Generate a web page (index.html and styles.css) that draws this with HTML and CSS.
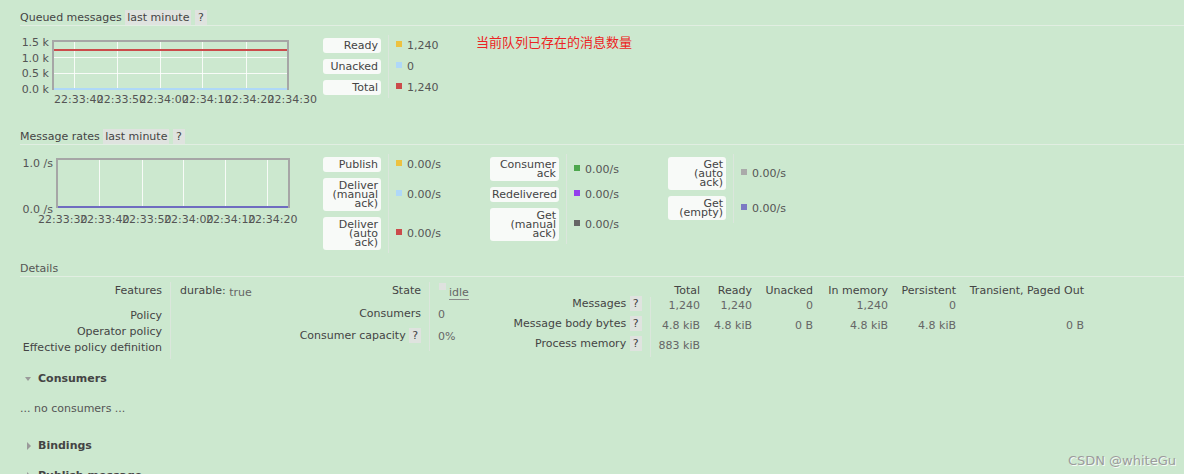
FILE: index.html
```html
<!DOCTYPE html>
<html lang="zh">
<head>
<meta charset="utf-8">
<title>Queue details</title>
<link rel="stylesheet" href="styles.css">
</head>
<body>
<main class="page">
  <h3 class="sec sec-queued">Queued messages <span class="pill">last minute</span> <span class="pill q">?</span></h3>
  <div class="chart-row">
    <svg class="chart" width="300" height="74" viewBox="0 0 300 74">
      <g class="grid">
        <line x1="54.5" y1="8" x2="54.5" y2="56"/>
        <line x1="97.5" y1="8" x2="97.5" y2="56"/>
        <line x1="140.5" y1="8" x2="140.5" y2="56"/>
        <line x1="182.5" y1="8" x2="182.5" y2="56"/>
        <line x1="226.5" y1="8" x2="226.5" y2="56"/>
        <line x1="33" y1="24.5" x2="268" y2="24.5"/>
        <line x1="33" y1="40.5" x2="268" y2="40.5"/>
      </g>
      <rect class="frame" x="33" y="8" width="235" height="48"/>
      <line class="s-ready" x1="34" y1="17" x2="267" y2="17"/>
      <line class="s-unacked" x1="34" y1="56" x2="267" y2="56"/>
      <line class="s-total" x1="34" y1="17" x2="267" y2="17"/>
      <text class="yl" x="29" y="13">1.5 k</text>
      <text class="yl" x="29" y="28.5">1.0 k</text>
      <text class="yl" x="29" y="44">0.5 k</text>
      <text class="yl" x="29" y="60">0.0 k</text>
      <text class="xl" x="34" y="70">22:33:40</text>
      <text class="xl" x="76.7" y="70">22:33:50</text>
      <text class="xl" x="119.4" y="70">22:34:00</text>
      <text class="xl" x="162" y="70">22:34:10</text>
      <text class="xl" x="204.8" y="70">22:34:20</text>
      <text class="xl" x="247.5" y="70">22:34:30</text>
    </svg>
    <table class="legend lg-q">
      <tr><th><span class="key">Ready</span></th><td><span class="sw c1"></span>1,240</td></tr>
      <tr><th><span class="key">Unacked</span></th><td><span class="sw c2"></span>0</td></tr>
      <tr class="last"><th><span class="key">Total</span></th><td><span class="sw c3"></span>1,240</td></tr>
    </table>
    <p class="note">当前队列已存在的消息数量</p>
  </div>

  <h3 class="sec sec-rates">Message rates <span class="pill">last minute</span> <span class="pill q">?</span></h3>
  <div class="chart-row">
    <svg class="chart" width="300" height="74" viewBox="0 0 300 74">
      <g class="grid">
        <line x1="79.5" y1="7" x2="79.5" y2="55"/>
        <line x1="122.5" y1="7" x2="122.5" y2="55"/>
        <line x1="163.5" y1="7" x2="163.5" y2="55"/>
        <line x1="205.5" y1="7" x2="205.5" y2="55"/>
        <line x1="247.5" y1="7" x2="247.5" y2="55"/>
      </g>
      <rect class="frame" x="37" y="7" width="232" height="48"/>
      <line class="s-empty" x1="38" y1="55" x2="268" y2="55"/>
      <text class="yl" x="33" y="14.5">1.0 /s</text>
      <text class="yl" x="33" y="60.5">0.0 /s</text>
      <text class="xl" x="18" y="71">22:33:30</text>
      <text class="xl" x="60" y="71">22:33:40</text>
      <text class="xl" x="102" y="71">22:33:50</text>
      <text class="xl" x="144" y="71">22:34:00</text>
      <text class="xl" x="186" y="71">22:34:10</text>
      <text class="xl" x="228" y="71">22:34:20</text>
    </svg>
    <div class="legends">
      <table class="legend lg-r">
        <tr><th><span class="key">Publish</span></th><td><span class="sw c1"></span>0.00/s</td></tr>
        <tr><th><span class="key">Deliver<br>(manual<br>ack)</span></th><td><span class="sw c2"></span>0.00/s</td></tr>
        <tr class="last"><th><span class="key">Deliver<br>(auto<br>ack)</span></th><td><span class="sw c3"></span>0.00/s</td></tr>
      </table>
      <table class="legend lg-r">
        <tr><th><span class="key wide">Consumer<br>ack</span></th><td><span class="sw c4"></span>0.00/s</td></tr>
        <tr><th><span class="key wide">Redelivered</span></th><td><span class="sw c5"></span>0.00/s</td></tr>
        <tr class="last"><th><span class="key wide">Get<br>(manual<br>ack)</span></th><td><span class="sw c6"></span>0.00/s</td></tr>
      </table>
      <table class="legend lg-r">
        <tr><th><span class="key">Get<br>(auto<br>ack)</span></th><td><span class="sw c7"></span>0.00/s</td></tr>
        <tr class="last"><th><span class="key">Get<br>(empty)</span></th><td><span class="sw c8"></span>0.00/s</td></tr>
      </table>
    </div>
  </div>

  <h3 class="sec sec-details">Details</h3>
  <div class="details">
    <table class="kv kv1">
      <tr class="r1"><th>Features</th><td><span class="feat">durable:</span> <span class="fv">true</span></td></tr>
      <tr><th>Policy</th><td></td></tr>
      <tr><th>Operator policy</th><td></td></tr>
      <tr class="rl"><th>Effective policy definition</th><td></td></tr>
    </table>
    <table class="kv kv2">
      <tr class="s1"><th>State</th><td><span class="st-box"></span><abbr class="idle">idle</abbr></td></tr>
      <tr class="s2"><th>Consumers</th><td class="val">0</td></tr>
      <tr class="s3"><th>Consumer capacity <span class="pill q">?</span></th><td class="val">0%</td></tr>
    </table>
    <table class="stats">
      <colgroup>
        <col class="w-lbl"><col class="w1"><col class="w2"><col class="w3"><col class="w4"><col class="w5"><col class="w6">
      </colgroup>
      <tr class="hd"><th></th><th>Total</th><th>Ready</th><th>Unacked</th><th>In memory</th><th>Persistent</th><th>Transient, Paged Out</th></tr>
      <tr><th>Messages <span class="pill q">?</span></th><td class="first">1,240</td><td>1,240</td><td>0</td><td>1,240</td><td>0</td><td></td></tr>
      <tr><th>Message body bytes <span class="pill q">?</span></th><td class="first">4.8 kiB</td><td>4.8 kiB</td><td>0 B</td><td>4.8 kiB</td><td>4.8 kiB</td><td>0 B</td></tr>
      <tr><th>Process memory <span class="pill q">?</span></th><td class="first">883 kiB</td><td></td><td></td><td></td><td></td><td></td></tr>
    </table>
  </div>

  <h2 class="toggle t-consumers"><span class="tri down"></span>Consumers</h2>
  <p class="empty">... no consumers ...</p>
  <h2 class="toggle t-bindings"><span class="tri right"></span>Bindings</h2>
  <h2 class="toggle t-publish"><span class="tri right"></span>Publish message</h2>
</main>
<div class="watermark">CSDN @whiteGu</div>
</body>
</html>
```

FILE: styles.css
```css
html, body {
  margin: 0;
  padding: 0;
  overflow: hidden;
  background: #cce8cf;
}
body {
  font-family: "DejaVu Sans", Verdana, sans-serif;
  font-size: 11px;
  color: #444;
  width: 1184px;
  height: 474px;
  position: relative;
}
.page {
  padding: 10px 0 0 20px;
}

/* section headings */
.sec {
  margin: 0;
  font-size: 11px;
  font-weight: normal;
  line-height: 15px;
  border-bottom: 1px solid #e1eee2;
  color: #444;
  white-space: nowrap;
}
.sec-rates { margin-top: 22px; }
.sec-details { margin-top: 8px; color: #555; }

.pill {
  background: #dfe3df;
  padding: 1px 2px;
  color: #444;
}
.pill.q { padding: 1px 3px; }

/* charts */
.chart-row {
  display: flex;
  align-items: flex-start;
  margin-top: 7px;
}
.chart {
  display: block;
  flex: none;
  overflow: visible;
}
.chart .grid line {
  stroke: #ffffff;
  stroke-width: 1;
  opacity: 0.85;
}
.chart .frame {
  fill: none;
  stroke: #a6a6a6;
  stroke-width: 2;
}
.chart text {
  font-family: "DejaVu Sans", Verdana, sans-serif;
  font-size: 11px;
  fill: #545454;
}
.chart .yl { text-anchor: end; }
.s-ready { stroke: #edc240; stroke-width: 2; }
.s-unacked { stroke: #afd8f8; stroke-width: 2; }
.s-total { stroke: #cb4b4b; stroke-width: 2; }
.s-empty { stroke: #6f6cc0; stroke-width: 2; }

/* legends */
.legends {
  display: flex;
  align-items: flex-start;
  margin-left: 3px;
}
.lg-q { margin-left: 3px; }
.legend {
  border-collapse: collapse;
  margin-top: 2px;
  flex: none;
}
.legend th {
  padding: 3px 7px 3px 0;
  font-weight: normal;
  vertical-align: top;
  text-align: right;
}
.legend tr.last th { padding-bottom: 3px; }
.legend td {
  border-left: 1px solid #dbe6dc;
  padding: 0 0 0 7px;
  vertical-align: middle;
  color: #555;
  white-space: nowrap;
  width: 94px;
}
.lg-q td { width: 70px; }
.key {
  display: block;
  box-sizing: border-box;
  width: 58px;
  padding: 3px 3px 3px 2px;
  background: #f8faf8;
  border-radius: 3px;
  line-height: 9px;
  text-align: right;
  white-space: nowrap;
  color: #444;
}
.key.wide { width: 69px; }
.sw {
  display: inline-block;
  width: 6px;
  height: 6px;
  margin-right: 5px;
  vertical-align: 2px;
}
.c1 { background: #edc240; }
.c2 { background: #afd8f8; }
.c3 { background: #cb4b4b; }
.c4 { background: #4da74d; }
.c5 { background: #9440ed; }
.c6 { background: #666666; }
.c7 { background: #aaaaaa; }
.c8 { background: #7c79c3; }

.note {
  margin: 0 0 0 10px;
  font-family: "Noto Sans CJK SC", "DejaVu Sans", sans-serif;
  font-size: 13px;
  line-height: 18px;
  color: #ec2424;
  white-space: nowrap;
}

/* details */
.details {
  display: flex;
  align-items: flex-start;
  margin-top: 5px;
}
.kv {
  border-collapse: collapse;
  flex: none;
}
.kv th {
  text-align: right;
  font-weight: normal;
  padding: 0 8px 0 0;
  line-height: 16px;
  vertical-align: top;
  white-space: nowrap;
}
.kv td {
  border-left: 1px solid #dbe6dc;
  padding: 0 0 0 8px;
  line-height: 16px;
  vertical-align: top;
  white-space: nowrap;
}
.kv1 th { width: 142px; }
.kv1 td { width: 81px; padding-left: 9px; }
.kv1 .r1 > * { padding-top: 1px; padding-bottom: 7px; }
.kv1 .rl > * { padding-bottom: 3px; }
.feat { color: #444; }
.fv { color: #666; vertical-align: -2px; }

.kv2 th { width: 160px; }
.kv2 td { width: 64px; color: #666; }
.kv2 .s1 > * { padding-top: 1px; padding-bottom: 6px; }
.kv2 .s2 > * { padding-bottom: 5px; }
.kv2 .s3 > * { padding-bottom: 6px; }
.kv2 .val { padding-top: 1px; }
.kv2 .s3 th { padding-top: 0; }
.st-box {
  display: inline-block;
  width: 7px;
  height: 7px;
  background: #dfe2df;
  margin: 0 3px 0 1px;
  vertical-align: 4px;
}
.idle {
  text-decoration: none;
  border-bottom: 1px solid #8a8a8a;
  color: #666;
  vertical-align: -2px;
  line-height: 13px;
  display: inline-block;
}

.stats {
  border-collapse: collapse;
  table-layout: fixed;
  width: 582px;
  margin-top: 4px;
  flex: none;
}
.w-lbl { width: 148px; }
.w1 { width: 50px; }
.w2 { width: 52px; }
.w3 { width: 61px; }
.w4 { width: 75px; }
.w5 { width: 68px; }
.w6 { width: 128px; }
.stats th, .stats td {
  padding: 0;
  text-align: right;
  white-space: nowrap;
  vertical-align: top;
  font-weight: normal;
}
.stats .hd th {
  line-height: 10px;
  height: 10px;
  padding-bottom: 1px;
  color: #444;
}
.stats tr th:first-child {
  padding-right: 8px;
  line-height: 14px;
  padding-bottom: 6px;
}
.stats .hd th:first-child { padding-bottom: 1px; line-height: 10px; }
.stats td {
  line-height: 14px;
  padding-top: 2px;
  padding-bottom: 4px;
  color: #666;
}
.stats td.first { border-left: 1px solid #dbe6dc; }

/* collapsible sections */
.toggle {
  display: flex;
  align-items: center;
  margin: 0;
  font-size: 11px;
  font-weight: bold;
  line-height: 16px;
  color: #444;
  white-space: nowrap;
}
.t-consumers { margin-top: 12px; }
.t-bindings { margin-top: 21px; }
.t-publish { margin-top: 14px; }
.tri {
  display: inline-block;
  width: 0;
  height: 0;
  flex: none;
}
.tri.down {
  border-left: 3.5px solid transparent;
  border-right: 3.5px solid transparent;
  border-top: 4px solid #9a9a9a;
  margin: 0 7px 0 5px;
}
.tri.right {
  border-top: 4px solid transparent;
  border-bottom: 4px solid transparent;
  border-left: 4px solid #9a9a9a;
  margin: 0 7px 0 7px;
}
.empty {
  margin: 14px 0 0 0;
  line-height: 16px;
  color: #555;
}

.watermark {
  position: absolute;
  top: 453px;
  right: 8px;
  font-family: "DejaVu Sans", sans-serif;
  font-size: 13px;
  line-height: 16px;
  color: #9c9c9c;
  text-shadow: 1px 1px 0 rgba(255, 255, 255, 0.85);
  white-space: nowrap;
}
```
